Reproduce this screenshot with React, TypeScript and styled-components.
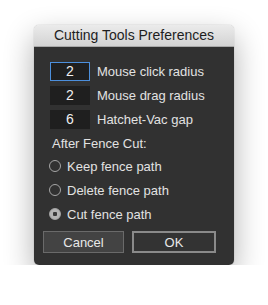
import styled, { createGlobalStyle } from "styled-components";

const GlobalStyle = createGlobalStyle`
  body {
    margin: 0;
    background: #ffffff;
    font-family: "Liberation Sans", Arial, sans-serif;
  }
`;

interface FieldProps {
  focused?: boolean;
}

interface RadioProps {
  checked?: boolean;
}

interface ButtonProps {
  primary?: boolean;
}

const fields = [
  { value: "2", label: "Mouse click radius", focused: true },
  { value: "2", label: "Mouse drag radius" },
  { value: "6", label: "Hatchet-Vac gap" },
];

const options = [
  { label: "Keep fence path" },
  { label: "Delete fence path" },
  { label: "Cut fence path", checked: true },
];

export default function App() {
  return (
    <Page>
      <GlobalStyle />
      <Window>
        <TitleBar>Cutting Tools Preferences</TitleBar>
        <Body>
          <Fields>
            {fields.map((f) => (
              <FieldRow key={f.label}>
                <NumberBox focused={f.focused}>{f.value}</NumberBox>
                <Label>{f.label}</Label>
              </FieldRow>
            ))}
          </Fields>
          <SectionTitle>After Fence Cut:</SectionTitle>
          <RadioList>
            {options.map((o) => (
              <RadioRow key={o.label}>
                <Radio checked={o.checked} />
                <Label>{o.label}</Label>
              </RadioRow>
            ))}
          </RadioList>
          <ButtonRow>
            <Button>Cancel</Button>
            <Button primary>OK</Button>
          </ButtonRow>
        </Body>
      </Window>
    </Page>
  );
}

const Page = styled.div`
  padding: 25px 0 0 34px;
`;

const Window = styled.div`
  width: 200px;
  height: 240px;
  border-radius: 5px;
  overflow: hidden;
  display: flex;
  flex-direction: column;
  box-shadow: 0 12px 30px rgba(0, 0, 0, 0.32), 0 0 1px rgba(0, 0, 0, 0.4);
`;

const TitleBar = styled.div`
  height: 21px;
  line-height: 21px;
  text-align: center;
  font-size: 14px;
  color: #1e1e1e;
  background: linear-gradient(#ebebeb, #d3d3d3);
  border-bottom: 1px solid #a9a9a9;
`;

const Body = styled.div`
  flex: 1;
  background: #313131;
  padding: 15px 0 0 15px;
  display: flex;
  flex-direction: column;
`;

const Fields = styled.div`
  display: flex;
  flex-direction: column;
  gap: 5px;
  padding-left: 1px;
`;

const FieldRow = styled.div`
  display: flex;
  align-items: center;
  gap: 7px;
`;

const NumberBox = styled.div<FieldProps>`
  box-sizing: border-box;
  width: 40px;
  height: 19px;
  line-height: ${(p) => (p.focused ? "17px" : "19px")};
  background: #1f1f1f;
  border: ${(p) => (p.focused ? "1px solid #4c8fdc" : "none")};
  color: #f0f0f0;
  font-size: 14px;
  text-align: center;
`;

const Label = styled.span`
  color: #e2e2e2;
  font-size: 13px;
`;

const SectionTitle = styled.div`
  color: #e2e2e2;
  font-size: 13px;
  margin: 7px 0 0 3px;
`;

const RadioList = styled.div`
  display: flex;
  flex-direction: column;
  gap: 8px;
  margin-top: 7px;
`;

const RadioRow = styled.div`
  display: flex;
  align-items: center;
  gap: 6px;
  height: 16px;
`;

const Radio = styled.span<RadioProps>`
  box-sizing: border-box;
  width: 12px;
  height: 12px;
  border-radius: 50%;
  border: 1.5px solid #a5a5a5;
  background: ${(p) =>
    p.checked ? "radial-gradient(circle, #3a3a3a 0 2px, #b4b4b4 2.5px)" : "transparent"};
`;

const ButtonRow = styled.div`
  display: flex;
  gap: 8px;
  margin-top: 9px;
  margin-left: -6px;
`;

const Button = styled.button<ButtonProps>`
  box-sizing: border-box;
  height: 22px;
  width: ${(p) => (p.primary ? "84px" : "81px")};
  background: ${(p) => (p.primary ? "#333333" : "#434343")};
  border: ${(p) => (p.primary ? "2px solid #8a8a8a" : "1px solid #6a6a6a")};
  color: #e8e8e8;
  font-family: "Liberation Sans", Arial, sans-serif;
  font-size: 13px;
  padding: 0;
`;
